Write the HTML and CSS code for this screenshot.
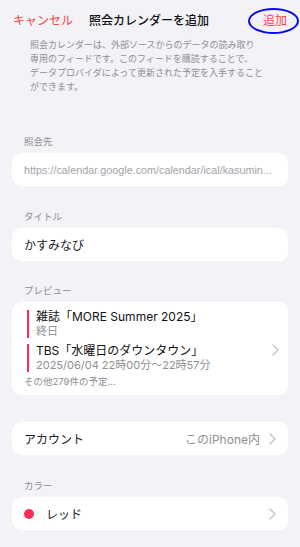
FILE: index.html
```html
<!DOCTYPE html>
<html lang="ja">
<head>
<meta charset="utf-8">
<link rel="stylesheet" href="styles.css">
</head>
<body>
<div class="page">
  <header class="nav">
    <span class="nav-cancel">キャンセル</span>
    <span class="nav-title">照会カレンダーを追加</span>
    <span class="nav-add">追加</span>
    <span class="mark"></span>
  </header>

  <p class="desc">照会カレンダーは、外部ソースからのデータの読み取り<br>専用のフィードです。このフィードを購読することで、<br>データプロバイダによって更新された予定を入手すること<br>ができます。</p>

  <section class="group first">
    <div class="label">照会先</div>
    <div class="card row">
      <span class="url">https://calendar.google.com/calendar/ical/kasumin...</span>
    </div>
  </section>

  <section class="group">
    <div class="label">タイトル</div>
    <div class="card row">
      <span class="text">かすみなび</span>
    </div>
  </section>

  <section class="group preview-group">
    <div class="label">プレビュー</div>
    <div class="card preview">
      <div class="events">
        <div class="event">
          <div class="ev-title">雑誌「MORE Summer 2025」</div>
          <div class="ev-sub">終日</div>
        </div>
        <div class="event">
          <div class="ev-title">TBS「水曜日のダウンタウン」</div>
          <div class="ev-sub">2025/06/04 22時00分〜22時57分</div>
        </div>
        <div class="more">その他279件の予定...</div>
      </div>
      <svg class="chev" width="7" height="12" viewBox="0 0 7 12"><polyline points="1,1 6,6 1,11" fill="none" stroke="#c4c4c8" stroke-width="1.4" stroke-linecap="round" stroke-linejoin="round"/></svg>
    </div>
  </section>

  <section class="group nolabel">
    <div class="card row">
      <span class="text">アカウント</span>
      <span class="value">このiPhone内</span>
      <svg class="chev" width="7" height="12" viewBox="0 0 7 12"><polyline points="1,1 6,6 1,11" fill="none" stroke="#c4c4c8" stroke-width="1.4" stroke-linecap="round" stroke-linejoin="round"/></svg>
    </div>
  </section>

  <section class="group">
    <div class="label">カラー</div>
    <div class="card row">
      <span class="dot"></span>
      <span class="text color-name">レッド</span>
      <svg class="chev" width="7" height="12" viewBox="0 0 7 12"><polyline points="1,1 6,6 1,11" fill="none" stroke="#c4c4c8" stroke-width="1.4" stroke-linecap="round" stroke-linejoin="round"/></svg>
    </div>
  </section>
</div>
</body>
</html>
```
FILE: styles.css
```css
* { box-sizing: border-box; }
html, body {
  margin: 0;
  padding: 0;
  background: #f2f2f7;
}
body {
  font-family: Inter, "Noto Sans CJK JP", sans-serif;
  color: #1c1c1e;
  width: 300px;
  height: 547px;
  overflow: hidden;
}
.page {
  display: flex;
  flex-direction: column;
}
.nav {
  position: relative;
  height: 38px;
  display: flex;
  align-items: center;
  padding: 0 13px;
  font-size: 12px;
}
.nav-cancel {
  color: #ff4444;
}
.nav-title {
  font-weight: 500;
  color: #111;
  margin-left: 16px;
}
.nav-add {
  color: #ff4444;
  margin-left: auto;
}
.mark {
  position: absolute;
  left: 248px;
  top: 8px;
  width: 51px;
  height: 26px;
  border: 2.5px solid #0a0aee;
  border-radius: 50%;
}
.desc {
  margin: 0;
  padding: 0 12px 0 30px;
  font-size: 9px;
  line-height: 14px;
  color: #8e8e93;
}
.group {
  display: flex;
  flex-direction: column;
  padding: 0 12px;
  margin-top: 24px;
}
.group.first {
  margin-top: 41px;
}
.group.preview-group {
  margin-top: 23px;
}
.group.nolabel {
  margin-top: 27px;
}
.label {
  font-size: 9.5px;
  line-height: 14px;
  color: #8e8e93;
  padding-left: 12px;
  margin-bottom: 4px;
}
.card {
  background: #fff;
  border-radius: 9px;
}
.row {
  height: 33px;
  display: flex;
  align-items: center;
  padding: 0 12px;
}
.url {
  font-family: "Liberation Sans", "Noto Sans CJK JP", sans-serif;
  font-size: 10.8px;
  color: #a3a3a8;
  white-space: nowrap;
  overflow: hidden;
}
.text {
  font-size: 12px;
  color: #1c1c1e;
}
.value {
  margin-left: auto;
  font-size: 12px;
  color: #8e8e93;
  margin-right: 9px;
}
.chev {
  flex: none;
}
.row .chev {
  margin-left: auto;
}
.row .value + .chev {
  margin-left: 0;
}
.preview {
  display: flex;
  align-items: center;
  padding: 8px 12px 6px 15px;
}
.events {
  flex: 1;
  display: flex;
  flex-direction: column;
  gap: 6px;
}
.event {
  border-left: 2px solid #ff2d55;
  padding-left: 7px;
}
.ev-title {
  font-size: 12px;
  line-height: 14px;
  color: #111;
}
.ev-sub {
  font-size: 11px;
  line-height: 14px;
  color: #8e8e93;
}
.more {
  font-size: 9.5px;
  line-height: 14px;
  color: #8e8e93;
  margin-left: -3px;
  margin-top: -3px;
}
.preview .chev {
  margin-right: -3px;
}
.dot {
  width: 10px;
  height: 10px;
  border-radius: 50%;
  background: #ff2d55;
  flex: none;
}
.color-name {
  margin-left: 12px;
}
```
